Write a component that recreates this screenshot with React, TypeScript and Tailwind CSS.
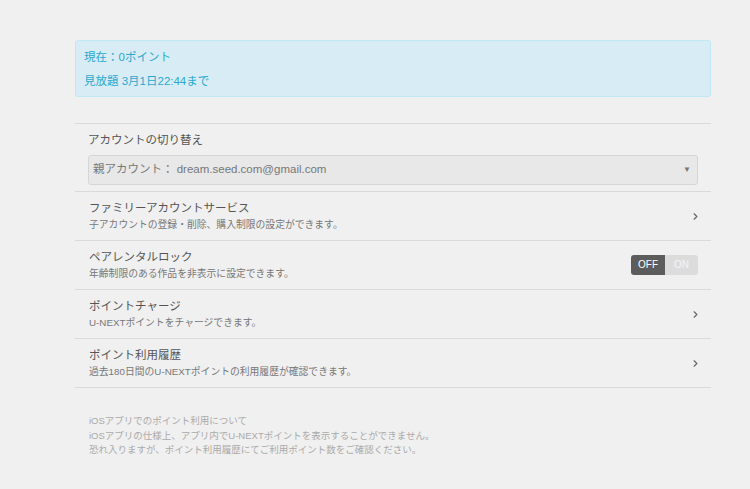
import { ChevronRight } from "lucide-react";

const FONT = { fontFamily: '"Liberation Sans", "Noto Sans CJK JP", sans-serif' };

const rows = [
  { title: "ファミリーアカウントサービス", sub: "子アカウントの登録・削除、購入制限の設定ができます。", kind: "link" },
  { title: "ペアレンタルロック", sub: "年齢制限のある作品を非表示に設定できます。", kind: "toggle" },
  { title: "ポイントチャージ", sub: "U-NEXTポイントをチャージできます。", kind: "link" },
  { title: "ポイント利用履歴", sub: "過去180日間のU-NEXTポイントの利用履歴が確認できます。", kind: "link" },
];

function Toggle() {
  return (
    <div className="flex h-[20px] overflow-hidden rounded-[3px] text-[10px] leading-none">
      <span className="flex w-[34px] items-center justify-center bg-[#5c5c5c] text-white">OFF</span>
      <span className="flex w-[33px] items-center justify-center bg-[#dcdcdc] text-[#f4f4f4]">ON</span>
    </div>
  );
}

export default function App() {
  return (
    <div className="min-h-[489px] w-full bg-[#f0f0f0] pt-[40px]" style={FONT}>
      <div className="ml-[75px] w-[636px]">
        <div className="h-[57px] rounded-[3px] border border-[#bfe8f2] bg-[#d8ecf6] px-[8px] pt-[4px] text-[11.5px] leading-[24px] text-[#2aa8cc]">
          <p>現在：0ポイント</p>
          <p>見放題 3月1日22:44まで</p>
        </div>

        <div className="mt-[26px] border-t border-[#dadada]">
          <div className="border-b border-[#dadada] px-[13px] pt-[7px] pb-[6px]">
            <p className="text-[11.5px] leading-[18px] text-[#555]">アカウントの切り替え</p>
            <div className="mt-[6px] flex h-[30px] items-center justify-between rounded-[3px] border border-[#d6d6d6] bg-[#e8e8e8] pr-[6px] pl-[4px] text-[11.5px] text-[#777]">
              <span>親アカウント： dream.seed.com@gmail.com</span>
              <span className="text-[8px] text-[#777]">▼</span>
            </div>
          </div>

          {rows.map((r) => (
            <div
              key={r.title}
              className="flex h-[49px] items-center justify-between border-b border-[#dadada] pr-[10px] pl-[14px]"
            >
              <div>
                <p className="text-[11.5px] leading-[18px] text-[#555]">{r.title}</p>
                <p className="text-[9.8px] leading-[16px] text-[#777]">{r.sub}</p>
              </div>
              {r.kind === "toggle" ? (
                <div className="mr-[3px]">
                  <Toggle />
                </div>
              ) : (
                <ChevronRight className="h-[11px] w-[11px] text-[#666]" strokeWidth={2.5} />
              )}
            </div>
          ))}
        </div>

        <div className="mt-[26px] px-[14px] text-[9.5px] leading-[14.5px] text-[#aaa]">
          <p>iOSアプリでのポイント利用について</p>
          <p>iOSアプリの仕様上、アプリ内でU-NEXTポイントを表示することができません。</p>
          <p>恐れ入りますが、ポイント利用履歴にてご利用ポイント数をご確認ください。</p>
        </div>
      </div>
    </div>
  );
}
